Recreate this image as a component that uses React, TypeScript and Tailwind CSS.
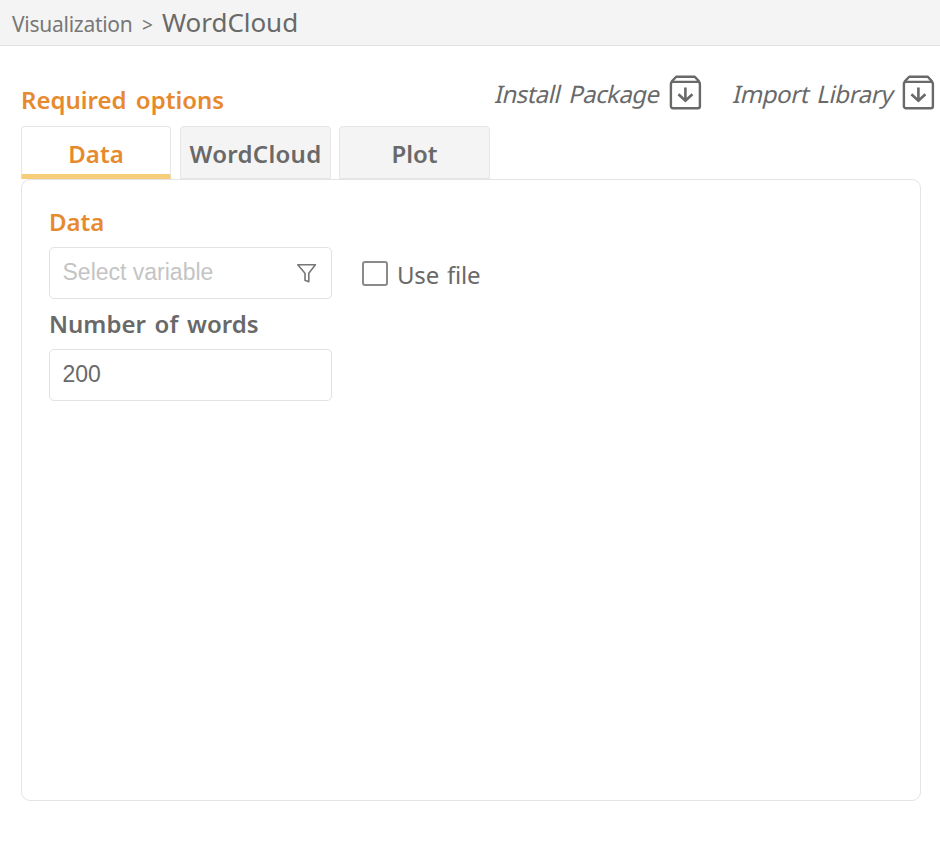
function BoxDownIcon() {
  return (
    <svg width="34" height="36" viewBox="0 0 34 36" fill="none" stroke="#696969" strokeWidth="2.4" strokeLinejoin="round" className="shrink-0">
      <rect x="1.9" y="7.9" width="29" height="26.4" rx="2" />
      <path d="M2.4 7.9 7.2 2.8H25.8L30.4 7.9" />
      <path d="M16.4 13.6V26.8M9.4 20.2 16.4 26.8 23.4 20.2" strokeLinejoin="miter" strokeWidth="2.6" />
    </svg>
  );
}

function FunnelIcon() {
  return (
    <svg width="22" height="22" viewBox="0 0 22 22" fill="none" stroke="#777" strokeWidth="1.6" strokeLinejoin="round" className="shrink-0">
      <path d="M1.8 2.8H19.4L12.8 11.2V19.8L9 18.2V11.2Z" />
    </svg>
  );
}

export default function App() {
  return (
    <div className="flex h-[868px] w-[940px] flex-col overflow-hidden bg-white font-['Noto_Sans',sans-serif] whitespace-nowrap text-[#696969]">
      <header className="flex h-[46px] shrink-0 items-baseline border-b border-[#e2e2e2] bg-[#f4f4f4] pl-3 leading-[44px]">
        <span className="w-[130px] text-[21px] tracking-[-0.27px] text-[#777]">Visualization</span>
        <span className="w-5 text-[19px] text-[#777]">&gt;</span>
        <h1 className="text-[26px] tracking-[-0.05px]">WordCloud</h1>
      </header>

      <div className="flex h-20 shrink-0 justify-between pl-[21px]">
        <h2 className="pt-[36px] text-[24px] leading-9 font-semibold text-[#e78a2e] [word-spacing:3px]">Required options</h2>
        <div className="flex pt-7 pr-1">
          <button className="flex w-[238px] items-start">
            <span className="w-[173px] origin-left -skew-x-[13deg] pt-[2px] text-left text-[24px] leading-9 tracking-[-0.55px] [word-spacing:3.5px]">Install Package</span>
            <BoxDownIcon />
          </button>
          <button className="flex items-start">
            <span className="w-[168px] origin-left -skew-x-[13deg] pt-[2px] text-left text-[24px] leading-9 tracking-[-0.4px] [word-spacing:2.5px]">Import Library</span>
            <BoxDownIcon />
          </button>
        </div>
      </div>

      <nav className="flex h-[53px] shrink-0 gap-[9px] pl-[21px] text-[24px] font-semibold">
        <button className="flex w-[150px] justify-center rounded-t border border-b-[5px] border-[#e6e6e6] border-b-[#f7cd7a] bg-white pt-[9px] leading-9 text-[#e78a2e]">Data</button>
        <button className="flex w-[151px] justify-center rounded-t border border-[#e6e6e6] bg-[#f4f4f4] pt-[9px] leading-9 tracking-[0.3px]">WordCloud</button>
        <button className="-ml-px flex w-[151px] justify-center rounded-t border border-[#e6e6e6] bg-[#f4f4f4] pt-[9px] leading-9">Plot</button>
      </nav>

      <main className="ml-[21px] h-[622px] w-[900px] shrink-0 rounded-[9px] border border-[#e4e4e4] pt-6 pl-[27px]">
        <h3 className="h-[43px] text-[24px] leading-9 font-semibold text-[#e78a2e]">Data</h3>
        <div className="flex h-[52px] items-center">
          <div className="flex h-[52px] w-[283px] items-center justify-between rounded-[5px] border border-[#e2e2e2] pr-[13px] pb-px pl-[12.5px] font-['Liberation_Sans',sans-serif] text-[23px] text-[#c4c4c4]">
            <span>Select variable</span>
            <FunnelIcon />
          </div>
          <label className="flex items-center pl-[30px]">
            <span className="h-[25px] w-[26px] rounded-[3px] border-2 border-[#8a8a8a]" />
            <span className="pt-[3px] pl-[9px] text-[24px] tracking-[-0.2px] [word-spacing:2px]">Use file</span>
          </label>
        </div>
        <h3 className="h-[50px] pt-[7px] text-[24px] leading-9 font-semibold [word-spacing:2.5px]">Number of words</h3>
        <div className="flex h-[52px] w-[283px] items-center rounded-[5px] border border-[#e2e2e2] pb-px pl-[12.5px] font-['Liberation_Sans',sans-serif] text-[23px]">200</div>
      </main>
    </div>
  );
}
